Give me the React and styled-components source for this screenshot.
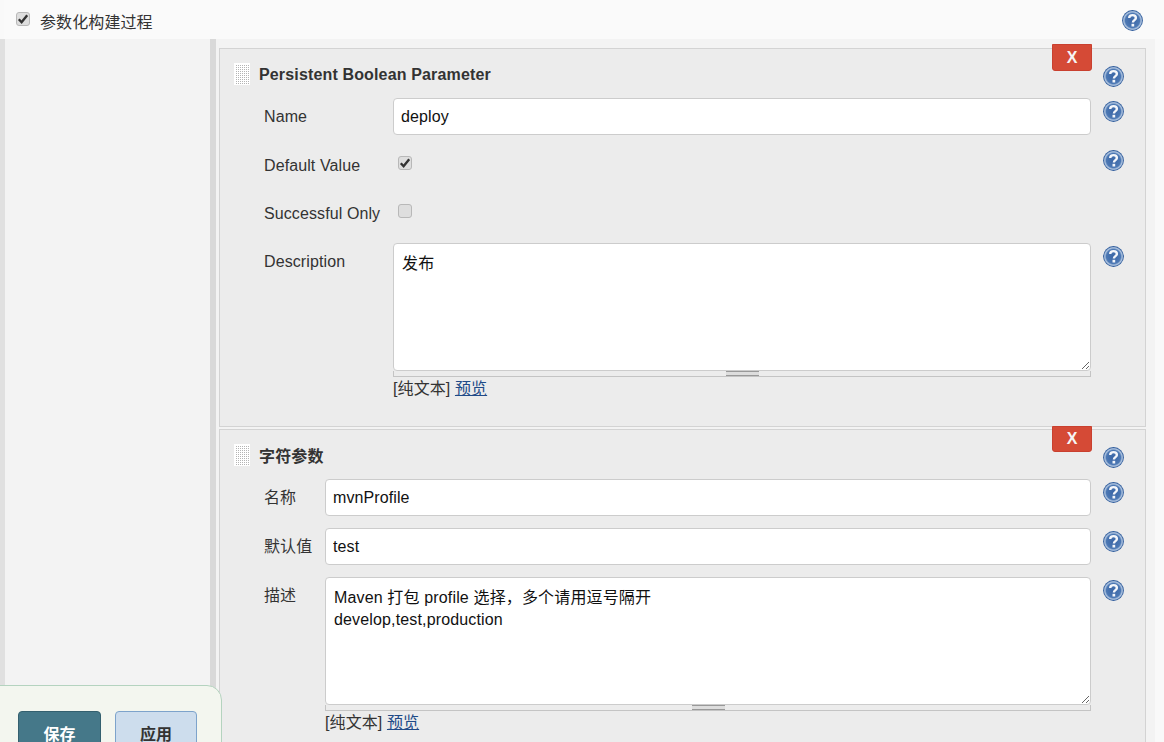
import React from 'react';
import styled, { createGlobalStyle } from 'styled-components';

const GlobalStyle = createGlobalStyle`
  html, body {
    margin: 0;
    padding: 0;
    background: #f9f9f9;
    overflow: hidden;
  }
  body {
    font-family: "Liberation Sans", "Noto Sans CJK SC", Arial, sans-serif;
    font-size: 16px;
    letter-spacing: 0.1px;
    color: #333;
  }
`;

const Page = styled.div`
  position: relative;
  width: 1164px;
  height: 742px;
  overflow: hidden;
`;

const SectionHeader = styled.div`
  height: 39px;
  margin-left: 4px;
  padding: 2px 21px 0 12px;
  box-sizing: border-box;
  background: #fafafa;
  display: flex;
  align-items: center;
  justify-content: space-between;
`;

const SectionTitle = styled.label`
  display: flex;
  align-items: center;
  gap: 10px;
`;

const SectionBody = styled.div`
  margin-right: 9px;
  height: 703px;
  box-sizing: border-box;
  border-left: 5px solid #e0e0e0;
  background: #f3f3f3;
  padding-left: 205px;
`;

const ParamList = styled.div`
  height: 100%;
  box-sizing: border-box;
  border-left: 6px solid #d9d9d9;
  padding: 9px 9px 0 3px;
  display: flex;
  flex-direction: column;
  gap: 2px;
`;

const Panel = styled.div`
  position: relative;
  border: 1px solid #d3d3d3;
  background: #ececec;
  padding: 14px 22px 26px 14px;
  display: flex;
  flex-direction: column;
  gap: 12px;
`;

const PanelHead = styled.div`
  display: flex;
  align-items: flex-start;
  justify-content: space-between;
  margin: 0 -1px -1px 0;
  height: 24px;
`;

const PanelTitle = styled.div`
  display: flex;
  align-items: center;
  gap: 9px;
  font-weight: bold;
  letter-spacing: 0.15px;
  height: 22px;
`;

const TitleText = styled.span`
  padding-top: ${(p) => p.$shift || 0}px;
`;

const DragHandle = styled.span`
  width: 16px;
  height: 22px;
  box-sizing: border-box;
  border: 1px solid #fff;
  background:
    linear-gradient(90deg, #fff 1px, transparent 1px) 0 0 / 2px 2px,
    linear-gradient(#fff 1px, #b4b4b4 1px) 0 0 / 2px 2px;
`;

const DeleteButton = styled.button`
  position: absolute;
  top: ${(p) => p.$top}px;
  right: 53px;
  width: 40px;
  height: ${(p) => p.$height}px;
  padding: 0;
  border: 1px solid #c9402f;
  border-radius: 0 0 3px 3px;
  background: #d54a36;
  color: #f5f5f5;
  font: bold 16px "Liberation Sans", Arial, sans-serif;
`;

const Row = styled.div`
  display: grid;
  grid-template-columns: ${(p) => p.$labelWidth}px 1fr 32px;
  align-items: start;
  padding-left: 30px;
  min-height: 36px;
`;

const Label = styled.div`
  height: 36px;
  line-height: 38px;
`;

const TextInput = styled.input`
  width: 100%;
  height: 37px;
  box-sizing: border-box;
  border: 1px solid #ccc;
  border-radius: 4px;
  padding: 0 7px;
  background: #fff;
  color: #111;
  font: 16px "Liberation Sans", Arial, sans-serif;
  letter-spacing: inherit;
  outline: none;
`;

const AreaWrap = styled.div`
  display: flex;
  flex-direction: column;
`;

const Area = styled.textarea`
  display: block;
  width: 100%;
  height: 128px;
  box-sizing: border-box;
  border: 1px solid #ccc;
  border-radius: 4px;
  padding: 9px 8px 7px;
  background: #fff;
  color: #111;
  font: 16px/22px "Liberation Sans", "Noto Sans CJK SC", Arial, sans-serif;
  letter-spacing: 0.15px;
  resize: vertical;
  outline: none;
`;

const Grippie = styled.div`
  height: 5px;
  border: 1px solid #c4c4c4;
  border-top: 0;
  display: flex;
  justify-content: center;

  &::before {
    content: '';
    width: 33px;
    height: 3px;
    border-top: 1px solid #999;
    border-bottom: 1px solid #999;
    background: #ddd;
  }
`;

const Hint = styled.div`
  margin-top: 1px;
  line-height: 22px;

  a {
    color: #204a87;
    text-decoration: underline;
  }
`;

const CheckBox = styled.span`
  width: 14px;
  height: 14px;
  margin: ${(p) => p.$margin || '9px 0 0 5px'};
  box-sizing: border-box;
  border: 1px solid #b8b8b8;
  border-radius: 3px;
  background: #dedede;
  display: flex;
  align-items: center;
  justify-content: center;
`;

const HelpSlot = styled.div`
  margin: 3px 0 0 12px;
  width: 21px;
  height: 21px;
`;

const Footer = styled.div`
  position: absolute;
  left: -2px;
  bottom: -2px;
  width: 224px;
  height: 59px;
  box-sizing: border-box;
  border: 1px solid #b4d3bf;
  border-radius: 0 15px 0 0;
  background: #f3f6ef;
  padding: 25px 0 0 19px;
  display: flex;
  align-items: flex-start;
  gap: 14px;
  overflow: hidden;
`;

const FootButton = styled.button`
  width: ${(p) => p.$width}px;
  height: 48px;
  padding: 0;
  border: 1px solid ${(p) => (p.$primary ? '#34606f' : '#7da3cb')};
  border-radius: 4px;
  background: ${(p) => (p.$primary ? '#457889' : '#cddded')};
  color: ${(p) => (p.$primary ? '#fff' : '#333')};
  font: bold 16px/30px "Liberation Sans", "Noto Sans CJK SC", Arial, sans-serif;
`;

const Check = () => (
  <svg width="12" height="12" viewBox="0 0 12 12">
    <path d="M1.8 6.2 L4.6 9.2 L10.2 2.2" fill="none" stroke="#333" strokeWidth="2.4" />
  </svg>
);

const HelpIcon = ({ id }) => (
  <svg width="21" height="21" viewBox="0 0 21 21">
    <defs>
      <radialGradient id={id} cx="0.5" cy="0.5" r="0.5">
        <stop offset="0" stopColor="#3a65a5" />
        <stop offset="0.68" stopColor="#4c78b4" />
        <stop offset="0.84" stopColor="#b4c8e2" />
        <stop offset="0.96" stopColor="#2f5c9c" />
      </radialGradient>
    </defs>
    <circle cx="10.5" cy="10.5" r="10.4" fill={`url(#${id})`} />
    <path
      d="M7.2 8 C7.2 6 8.7 5.1 10.5 5.1 C12.5 5.1 13.9 6.2 13.9 8 C13.9 10.1 10.9 10.2 10.9 12.5"
      fill="none"
      stroke="#f4f6fa"
      strokeWidth="2.4"
    />
    <rect x="9.5" y="13.8" width="2.7" height="2.7" fill="#f4f6fa" />
  </svg>
);

const Help = ({ id }) => (
  <HelpSlot>
    <HelpIcon id={id} />
  </HelpSlot>
);

const TextArea = ({ value }) => (
  <AreaWrap>
    <Area defaultValue={value} readOnly />
    <Grippie />
    <Hint>
      [纯文本] <a href="#preview">预览</a>
    </Hint>
  </AreaWrap>
);

const Head = ({ title, id, shift }) => (
  <PanelHead>
    <PanelTitle>
      <DragHandle />
      <TitleText $shift={shift}>{title}</TitleText>
    </PanelTitle>
    <Help id={id} />
  </PanelHead>
);

const App = () => (
  <Page>
    <GlobalStyle />
    <SectionHeader>
      <SectionTitle>
        <CheckBox $margin="-3px 0 0 0">
          <Check />
        </CheckBox>
        参数化构建过程
      </SectionTitle>
      <HelpIcon id="help-top" />
    </SectionHeader>
    <SectionBody>
      <ParamList>
        <Panel>
          <DeleteButton $top={-5} $height={27}>X</DeleteButton>
          <Head title="Persistent Boolean Parameter" id="help-a0" shift={2} />
          <Row $labelWidth={129}>
            <Label>Name</Label>
            <TextInput defaultValue="deploy" />
            <Help id="help-a1" />
          </Row>
          <Row $labelWidth={129}>
            <Label>Default Value</Label>
            <CheckBox>
              <Check />
            </CheckBox>
            <Help id="help-a2" />
          </Row>
          <Row $labelWidth={129}>
            <Label>Successful Only</Label>
            <CheckBox />
          </Row>
          <Row $labelWidth={129}>
            <Label>Description</Label>
            <TextArea value="发布" />
            <Help id="help-a3" />
          </Row>
        </Panel>
        <Panel>
          <DeleteButton $top={-4} $height={26}>X</DeleteButton>
          <Head title="字符参数" id="help-b0" />
          <Row $labelWidth={61}>
            <Label>名称</Label>
            <TextInput defaultValue="mvnProfile" />
            <Help id="help-b1" />
          </Row>
          <Row $labelWidth={61}>
            <Label>默认值</Label>
            <TextInput defaultValue="test" />
            <Help id="help-b2" />
          </Row>
          <Row $labelWidth={61}>
            <Label>描述</Label>
            <TextArea value={'Maven 打包 profile 选择，多个请用逗号隔开\ndevelop,test,production'} />
            <Help id="help-b3" />
          </Row>
        </Panel>
      </ParamList>
    </SectionBody>
    <Footer>
      <FootButton $primary $width={83}>保存</FootButton>
      <FootButton $width={82}>应用</FootButton>
    </Footer>
  </Page>
);

export default App;
